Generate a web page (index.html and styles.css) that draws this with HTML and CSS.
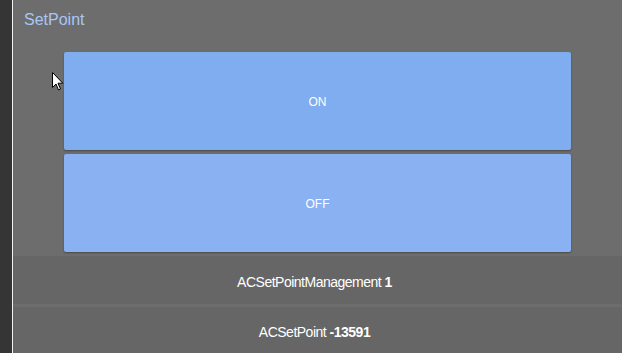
FILE: index.html
```html
<!DOCTYPE html>
<html lang="en">
<head>
  <meta charset="UTF-8">
  <title>SetPoint</title>
  <link rel="stylesheet" href="styles.css">
</head>
<body>

<div class="app">
  <div class="sidebar"></div>

  <div class="main">
    <div class="header">SetPoint</div>

    <div class="buttons">
      <div class="btn btn-on">ON</div>
      <div class="btn btn-off">OFF</div>
    </div>

    <div class="row">ACSetPointManagement&nbsp;<b>1</b></div>
    <div class="row row-last">ACSetPoint&nbsp;<b>-13591</b></div>
  </div>
</div>

<!-- mouse pointer from the screenshot -->
<svg class="cursor" width="12" height="20" viewBox="0 0 12 20">
  <path d="M0.5 0.5 L0.5 15.5 L4 12 L6.5 18 L8.5 17 L6 11.2 L10.8 11.2 Z" fill="#fff" stroke="#000" stroke-width="1"/>
</svg>

</body>
</html>
```

FILE: styles.css
```css
body {
  margin: 0;
  font-family: "Liberation Sans", Arial, sans-serif;
  background-color: #6d6d6d;
  overflow: hidden;
}
.app {
  display: flex;
  height: 353px;
}
.sidebar {
  width: 12px;
  background-color: #353535;
  border-right: 1px solid #f2f2f2;
  flex-shrink: 0;
}
.main {
  flex: 1;
  display: flex;
  flex-direction: column;
  background-color: #6d6d6d;
}
.header {
  box-sizing: border-box;
  height: 52px;
  padding: 11px 0 0 11px;
  font-size: 16px;
  line-height: 18px;
  color: #a9c6f4;
}
.buttons {
  display: flex;
  flex-direction: column;
  gap: 4px;
  padding: 0 51px 4px 51px;
}
.btn {
  box-sizing: border-box;
  height: 98px;
  padding-top: 2px;
  display: flex;
  align-items: center;
  justify-content: center;
  color: #fff;
  font-size: 12px;
  border-radius: 2px;
  box-shadow: 0 1px 2px rgba(0, 0, 0, 0.35);
}
.btn-on {
  background-color: #80acf0;
}
.btn-off {
  background-color: #8ab1f1;
}
.row {
  box-sizing: border-box;
  height: 48px;
  padding: 3px 6px 0 0;
  display: flex;
  align-items: center;
  justify-content: center;
  background-color: #666;
  color: #fff;
  font-size: 14px;
  letter-spacing: -0.5px;
}
.row b {
  font-weight: bold;
}
.row-last {
  margin-top: 3px;
  flex: 1;
}
.cursor {
  position: absolute;
  left: 52px;
  top: 72px;
}
```
